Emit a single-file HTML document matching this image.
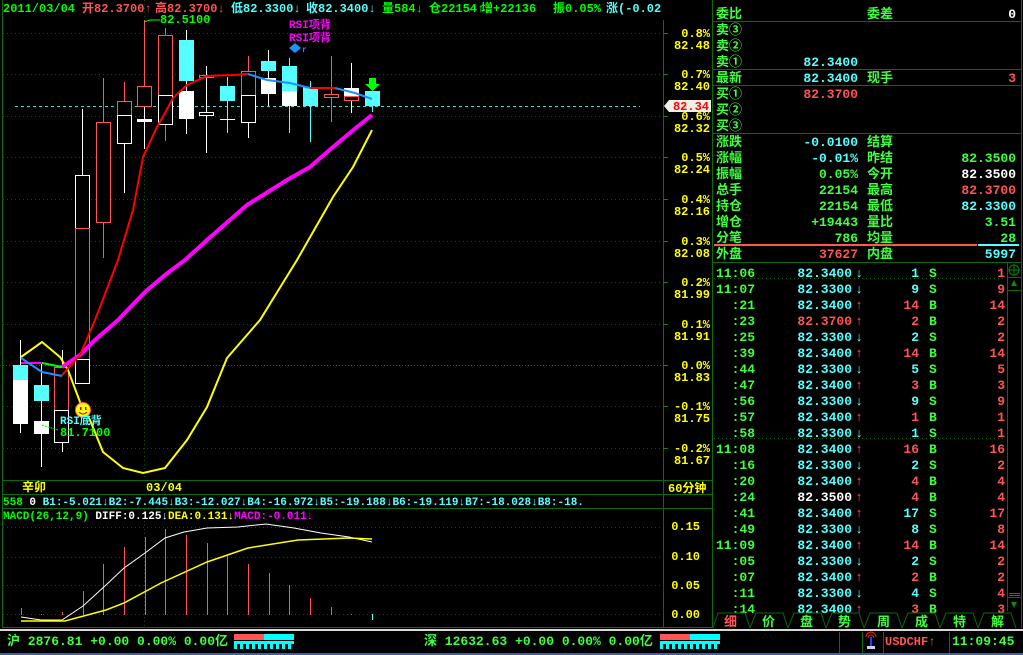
<!DOCTYPE html>
<html><head><meta charset="utf-8">
<style>
html,body{margin:0;padding:0;background:#000;width:1023px;height:655px;overflow:hidden}
svg{display:block}
text{font-family:"Liberation Mono","WenQuanYi Zen Hei","Noto Sans CJK SC",monospace;font-weight:bold}
</style></head><body>
<svg width="1023" height="655" viewBox="0 0 1023 655" xmlns="http://www.w3.org/2000/svg">
<rect width="1023" height="655" fill="#000"/>
<g stroke="#0b6b0b" stroke-width="1" fill="none">
<line x1="2.5" y1="0" x2="2.5" y2="628"/>
<line x1="663.5" y1="0" x2="663.5" y2="628"/>
<line x1="712.5" y1="0" x2="712.5" y2="628"/>
<line x1="1021.5" y1="0" x2="1021.5" y2="628"/>
<line x1="2" y1="480.5" x2="712" y2="480.5"/>
<line x1="2" y1="494.5" x2="712" y2="494.5"/>
<line x1="2" y1="508.5" x2="712" y2="508.5"/>
<line x1="2" y1="627.5" x2="1021" y2="627.5"/>
<line x1="713" y1="21.5" x2="1021" y2="21.5"/>
<line x1="713" y1="69.5" x2="1021" y2="69.5"/>
<line x1="713" y1="85.5" x2="1021" y2="85.5"/>
<line x1="713" y1="133.5" x2="1021" y2="133.5"/>
<line x1="713" y1="262.5" x2="1021" y2="262.5"/>
<line x1="1007.5" y1="262" x2="1007.5" y2="611"/>
<line x1="1008" y1="277.5" x2="1021" y2="277.5"/>
<line x1="1008" y1="290.5" x2="1021" y2="290.5"/>
<line x1="1008" y1="597.5" x2="1021" y2="597.5"/>
</g>
<g stroke="#0d4d0d" stroke-width="1" stroke-dasharray="1,3">
<line x1="3" y1="33.5" x2="663" y2="33.5"/>
<line x1="3" y1="74.5" x2="663" y2="74.5"/>
<line x1="3" y1="116.5" x2="663" y2="116.5"/>
<line x1="3" y1="157.5" x2="663" y2="157.5"/>
<line x1="3" y1="199.5" x2="663" y2="199.5"/>
<line x1="3" y1="241.5" x2="663" y2="241.5"/>
<line x1="3" y1="282.5" x2="663" y2="282.5"/>
<line x1="3" y1="324.5" x2="663" y2="324.5"/>
<line x1="3" y1="406.5" x2="663" y2="406.5"/>
<line x1="3" y1="448.5" x2="663" y2="448.5"/>
<line x1="144.5" y1="0" x2="144.5" y2="480"/>
<line x1="144.5" y1="509" x2="144.5" y2="627"/>
<line x1="3" y1="527.5" x2="663" y2="527.5"/>
<line x1="3" y1="557.5" x2="663" y2="557.5"/>
<line x1="3" y1="585.5" x2="663" y2="585.5"/>
<line x1="3" y1="614.5" x2="663" y2="614.5"/>
</g>
<line x1="3" y1="365.5" x2="663" y2="365.5" stroke="#4a4a4a" stroke-dasharray="1,2"/>
<g stroke="#0b8b0b">
<line x1="663" y1="33.5" x2="668" y2="33.5"/><line x1="663" y1="74.5" x2="668" y2="74.5"/><line x1="663" y1="116.5" x2="668" y2="116.5"/><line x1="663" y1="157.5" x2="668" y2="157.5"/><line x1="663" y1="199.5" x2="668" y2="199.5"/><line x1="663" y1="241.5" x2="668" y2="241.5"/><line x1="663" y1="282.5" x2="668" y2="282.5"/><line x1="663" y1="324.5" x2="668" y2="324.5"/><line x1="663" y1="365.5" x2="668" y2="365.5"/><line x1="663" y1="406.5" x2="668" y2="406.5"/><line x1="663" y1="448.5" x2="668" y2="448.5"/>
</g>
<g fill="#ffff00" font-size="12" text-anchor="end">
<text x="710" y="37">0.8%</text><text x="710" y="49">82.48</text>
<text x="710" y="78">0.7%</text><text x="710" y="90">82.40</text>
<text x="710" y="120">0.6%</text><text x="710" y="132">82.32</text>
<text x="710" y="161">0.5%</text><text x="710" y="173">82.24</text>
<text x="710" y="203">0.4%</text><text x="710" y="215">82.16</text>
<text x="710" y="245">0.3%</text><text x="710" y="257">82.08</text>
<text x="710" y="286">0.2%</text><text x="710" y="298">81.99</text>
<text x="710" y="328">0.1%</text><text x="710" y="340">81.91</text>
<text x="710" y="369">0.0%</text><text x="710" y="381">81.83</text>
<text x="710" y="410">-0.1%</text><text x="710" y="422">81.75</text>
<text x="710" y="452">-0.2%</text><text x="710" y="464">81.67</text>
<text x="700" y="530">0.15</text><text x="700" y="560">0.10</text><text x="700" y="589">0.05</text><text x="700" y="618">0.00</text>
</g>
<polygon points="664,106 669,100 711,100 711,112 669,112" fill="#f0f0e8"/>
<text x="709" y="110" fill="#ff0000" font-size="12" text-anchor="end">82.34</text>
<line x1="15" y1="106.5" x2="640" y2="106.5" stroke="#33dddd" stroke-dasharray="3,3"/>
<g stroke-width="1">
<line x1="20.5" y1="340" x2="20.5" y2="433" stroke="#fff"/>
<rect x="13" y="365" width="15" height="15" fill="#55ffff"/><rect x="13" y="380" width="15" height="44" fill="#fff"/>
<line x1="41.5" y1="364" x2="41.5" y2="467" stroke="#fff"/>
<rect x="34" y="385" width="15" height="16" fill="#55ffff"/><rect x="34" y="421" width="15" height="13" fill="#fff"/>
<line x1="62.5" y1="350" x2="62.5" y2="452" stroke="#fff"/>
<rect x="54.5" y="367.5" width="14" height="43" fill="#000" stroke="#ff5555"/><rect x="54.5" y="410.5" width="14" height="32" fill="#000" stroke="#fff"/>
<line x1="82.5" y1="109" x2="82.5" y2="175" stroke="#fff"/>
<rect x="75.5" y="175.5" width="14" height="53" fill="#000" stroke="#fff"/><rect x="75.5" y="228.5" width="14" height="131" fill="#000" stroke="#ff5555"/><rect x="75.5" y="359.5" width="14" height="24" fill="#000" stroke="#fff"/>
<line x1="103.5" y1="78" x2="103.5" y2="258" stroke="#ff5555"/>
<rect x="96.5" y="122.5" width="14" height="100" fill="#000" stroke="#ff5555"/>
<line x1="124.5" y1="82" x2="124.5" y2="101" stroke="#ff5555"/><line x1="124.5" y1="143" x2="124.5" y2="193" stroke="#fff"/>
<rect x="117.5" y="101.5" width="14" height="14" fill="#000" stroke="#ff5555"/><rect x="117.5" y="115.5" width="14" height="28" fill="#000" stroke="#fff"/>
<line x1="144.5" y1="20" x2="144.5" y2="86" stroke="#ff5555"/><line x1="144.5" y1="106" x2="144.5" y2="149" stroke="#fff"/>
<rect x="137.5" y="86.5" width="14" height="20" fill="#000" stroke="#ff5555"/><rect x="137" y="119" width="15" height="3" fill="#fff"/>
<line x1="165.5" y1="28" x2="165.5" y2="141" stroke="#ff5555"/>
<rect x="158.5" y="35.5" width="14" height="60" fill="#000" stroke="#ff5555"/><rect x="158.5" y="95.5" width="14" height="29" fill="#000" stroke="#fff"/>
<line x1="186.5" y1="30" x2="186.5" y2="134" stroke="#fff"/>
<rect x="179" y="40" width="15" height="41" fill="#55ffff"/><rect x="179" y="91" width="15" height="28" fill="#fff"/>
<line x1="206.5" y1="66" x2="206.5" y2="153" stroke="#fff"/>
<rect x="199.5" y="75.5" width="14" height="2" fill="#000" stroke="#ff5555"/><rect x="199.5" y="112.5" width="14" height="3" fill="#000" stroke="#fff"/>
<line x1="227.5" y1="77" x2="227.5" y2="133" stroke="#55ffff"/>
<rect x="220" y="86" width="15" height="15" fill="#55ffff"/><rect x="220" y="119" width="15" height="1" fill="#fff"/>
<line x1="248.5" y1="56" x2="248.5" y2="71" stroke="#ff5555"/><line x1="248.5" y1="122" x2="248.5" y2="138" stroke="#fff"/>
<rect x="241.5" y="71.5" width="14" height="24" fill="#000" stroke="#ff5555"/><rect x="241.5" y="95.5" width="14" height="27" fill="#000" stroke="#fff"/>
<line x1="268.5" y1="50" x2="268.5" y2="106" stroke="#fff"/>
<rect x="261" y="61" width="15" height="10" fill="#55ffff"/><rect x="261" y="78" width="15" height="16" fill="#fff"/>
<line x1="289.5" y1="58" x2="289.5" y2="133" stroke="#55ffff"/>
<rect x="282" y="66" width="15" height="25" fill="#55ffff"/><rect x="282" y="91" width="15" height="15" fill="#fff"/>
<line x1="310.5" y1="81" x2="310.5" y2="142" stroke="#55ffff"/>
<rect x="303" y="87" width="15" height="19" fill="#55ffff"/>
<line x1="331.5" y1="56" x2="331.5" y2="122" stroke="#ff5555"/>
<rect x="324.5" y="94.5" width="14" height="3" fill="#000" stroke="#ff5555"/>
<line x1="351.5" y1="63" x2="351.5" y2="113" stroke="#fff"/>
<rect x="344" y="88" width="15" height="8" fill="#fff"/><rect x="344.5" y="96.5" width="14" height="4" fill="#000" stroke="#ff5555"/>
<line x1="372.5" y1="106" x2="372.5" y2="112" stroke="#55ffff"/>
<rect x="365" y="91" width="15" height="15" fill="#55ffff"/>
<polygon points="369,78 376,78 376,84 380,84 372.5,91 365,84 369,84" fill="#00ff00"/>
</g>
<polyline fill="none" stroke="#ffff00" stroke-width="2" points="21,357 42,342 60,357 68,370 80,402 90,420 103,452 123,468 143,473 165,468 187,440 207,407 227,358 260,320 297,260 333,197 353,167 372,130"/>
<polyline fill="none" stroke="#ff00ff" stroke-width="4" points="62,367 80,355 95,340 118,320 145,292 165,275 185,260 207,240 247,205 287,180 310,167 333,147 357,127 372,115"/>
<polyline fill="none" stroke="#ff00ff" stroke-width="2" points="21,363 42,363"/>
<polyline fill="none" stroke="#00ff00" stroke-width="2" points="42,363 62,367"/>
<polyline fill="none" stroke="#1e90ff" stroke-width="2" points="21,358 42,372 62,376"/>
<polyline fill="none" stroke="#ff0000" stroke-width="2" points="62,375 80,355 95,320 118,260 133,210 143,157 157,127 165,113 173,98 187,85 207,76 233,75 248,74"/>
<polyline fill="none" stroke="#1e90ff" stroke-width="2" points="248,74 267,80 290,83 310,88"/>
<polyline fill="none" stroke="#ff0000" stroke-width="2" points="310,88 335,88"/>
<polyline fill="none" stroke="#1e90ff" stroke-width="2" points="335,88 355,93 372,99"/>
<polyline fill="none" stroke="#00ff00" points="144,22 150,20 160,20"/>
<text x="160" y="23" fill="#00ff00" font-size="12">82.5100</text>
<g fill="#ff00ff" font-size="11"><text x="289" y="28">RSI项背</text><text x="289" y="41">RSI项背</text></g>
<polygon points="295,43 301,48 295,53 289,48" fill="#1e90ff"/>
<text x="302" y="52" fill="#1e90ff" font-size="8">r</text>
<circle cx="83" cy="410" r="7.5" fill="#ffff00" stroke="#ff5555"/>
<rect x="80" y="407" width="1.5" height="3" fill="#c00"/><rect x="85" y="407" width="1.5" height="3" fill="#c00"/>
<path d="M79 412 Q83 416 87 412" stroke="#c00" fill="none"/>
<text x="60" y="424" fill="#55ffff" font-size="11">RSI底背</text>
<polyline fill="none" stroke="#00ff00" stroke-dasharray="2,1" points="42,425 58,430"/>
<text x="60" y="436" fill="#00ff00" font-size="12">81.7100</text>
<g font-size="12">
<text x="3" y="12" fill="#00ff00">2011/03/04</text>
<text x="82" y="12" fill="#ff5555">开82.3700↑</text>
<text x="155" y="12" fill="#ff5555">高82.3700↓</text>
<text x="231" y="12" fill="#55ffff">低82.3300↓</text>
<text x="306" y="12" fill="#55ffff">收82.3400↓</text>
<text x="382" y="12" fill="#00ff00">量584↓</text>
<text x="429" y="12" fill="#00ff00">仓22154↑</text>
<text x="481" y="12" fill="#00ff00">增+22136</text>
<text x="553" y="12" fill="#00ff00">振0.05%</text>
<text x="606" y="12" fill="#55ffff">涨(-0.02</text>
</g>
<rect x="662" y="0" width="2" height="20" fill="#000"/>
<text x="22" y="491" fill="#ffff00" font-size="12">辛卯</text>
<text x="146" y="491" fill="#ffff00" font-size="12">03/04</text>
<text x="668" y="492" fill="#ffff00" font-size="12">60分钟</text>
<text x="3" y="505" font-size="11"><tspan fill="#00ff00">558</tspan><tspan fill="#fff"> 0 </tspan><tspan fill="#55ffff">B1:-5.021↓B2:-7.445↓B3:-12.027↓B4:-16.972↓B5:-19.188↓B6:-19.119↓B7:-18.028↓B8:-18.</tspan></text>
<text x="3" y="519" font-size="11"><tspan fill="#00ff00">MACD(26,12,9)</tspan><tspan fill="#fff"> DIFF:0.125↓</tspan><tspan fill="#ffff00">DEA:0.131↓</tspan><tspan fill="#ff00ff">MACD:-0.011↓</tspan></text>
<g stroke="#ff5555" stroke-width="1">
<line x1="21.5" y1="608" x2="21.5" y2="615"/><line x1="41.5" y1="614" x2="41.5" y2="615"/><line x1="62.5" y1="612" x2="62.5" y2="615"/><line x1="83.5" y1="591" x2="83.5" y2="615"/><line x1="103.5" y1="564" x2="103.5" y2="615"/><line x1="124.5" y1="547" x2="124.5" y2="615"/><line x1="145.5" y1="537" x2="145.5" y2="615"/><line x1="165.5" y1="529" x2="165.5" y2="615"/><line x1="186.5" y1="535" x2="186.5" y2="615"/><line x1="207.5" y1="543" x2="207.5" y2="615"/><line x1="227.5" y1="556" x2="227.5" y2="615"/><line x1="248.5" y1="564" x2="248.5" y2="615"/><line x1="269.5" y1="573" x2="269.5" y2="615"/><line x1="289.5" y1="585" x2="289.5" y2="615"/><line x1="310.5" y1="598" x2="310.5" y2="615"/><line x1="331.5" y1="607" x2="331.5" y2="615"/><line x1="351.5" y1="614" x2="351.5" y2="615"/>
</g>
<line x1="372.5" y1="614" x2="372.5" y2="620" stroke="#55ffff"/>
<polyline fill="none" stroke="#fff" points="21,617 41,620 62,620 83,606 106,585 124,568 145,553 165,538 184,532 207,528 238,527 266,524 294,528 321,533 349,537 372,542"/>
<polyline fill="none" stroke="#ffff00" stroke-width="1.5" points="21,621 65,621 106,610 124,603 161,583 207,562 248,548 298,540 349,538 372,539"/>
<text x="760" y="-2" fill="#55ffff" font-size="12">82.3400</text>
<g font-size="13" fill="#40ff40">
<text x="716" y="18">委比</text><text x="867" y="18">委差</text>
<text x="716" y="34">卖③</text><text x="716" y="50">卖②</text><text x="716" y="66">卖①</text>
<text x="716" y="82">最新</text><text x="867" y="82">现手</text>
<text x="716" y="98">买①</text><text x="716" y="114">买②</text><text x="716" y="130">买③</text>
<text x="716" y="146">涨跌</text><text x="867" y="146">结算</text>
<text x="716" y="162">涨幅</text><text x="867" y="162">昨结</text>
<text x="716" y="178">振幅</text><text x="867" y="178">今开</text>
<text x="716" y="194">总手</text><text x="867" y="194">最高</text>
<text x="716" y="210">持仓</text><text x="867" y="210">最低</text>
<text x="716" y="226">增仓</text><text x="867" y="226">量比</text>
<text x="716" y="242">分笔</text><text x="867" y="242">均量</text>
<text x="716" y="258">外盘</text><text x="867" y="258">内盘</text>
</g>
<g font-size="13" text-anchor="end">
<text x="1016" y="18" fill="#fff">0</text>
<text x="858" y="66" fill="#55ffff">82.3400</text>
<text x="858" y="82" fill="#55ffff">82.3400</text><text x="1016" y="82" fill="#ff5555">3</text>
<text x="858" y="98" fill="#ff5555">82.3700</text>
<text x="858" y="146" fill="#55ffff">-0.0100</text>
<text x="858" y="162" fill="#55ffff">-0.01%</text><text x="1016" y="162" fill="#40ff40">82.3500</text>
<text x="858" y="178" fill="#40ff40">0.05%</text><text x="1016" y="178" fill="#fff">82.3500</text>
<text x="858" y="194" fill="#40ff40">22154</text><text x="1016" y="194" fill="#ff5555">82.3700</text>
<text x="858" y="210" fill="#40ff40">22154</text><text x="1016" y="210" fill="#55ffff">82.3300</text>
<text x="858" y="226" fill="#40ff40">+19443</text><text x="1016" y="226" fill="#40ff40">3.51</text>
<text x="858" y="242" fill="#40ff40">786</text><text x="1016" y="242" fill="#40ff40">28</text>
<text x="858" y="258" fill="#ff5555">37627</text><text x="1016" y="258" fill="#55ffff">5997</text>
</g>
<rect x="714" y="244" width="263" height="2" fill="#ff5555"/>
<rect x="978" y="244" width="41" height="2" fill="#55ffff"/>
<g stroke="#0d6d0d" stroke-dasharray="1,3"><line x1="714" y1="278.5" x2="1006" y2="278.5"/><line x1="714" y1="438.5" x2="1006" y2="438.5"/></g>
<g font-size="13">
<g fill="#40ff40">
<text x="716" y="277">11:06</text><text x="716" y="293">11:07</text>
<text x="755" y="309" text-anchor="end">:21</text><text x="755" y="325" text-anchor="end">:23</text><text x="755" y="341" text-anchor="end">:25</text><text x="755" y="357" text-anchor="end">:39</text><text x="755" y="373" text-anchor="end">:44</text><text x="755" y="389" text-anchor="end">:47</text><text x="755" y="405" text-anchor="end">:56</text><text x="755" y="421" text-anchor="end">:57</text><text x="755" y="437" text-anchor="end">:58</text>
<text x="716" y="453">11:08</text>
<text x="755" y="469" text-anchor="end">:16</text><text x="755" y="485" text-anchor="end">:20</text><text x="755" y="501" text-anchor="end">:24</text><text x="755" y="517" text-anchor="end">:41</text><text x="755" y="533" text-anchor="end">:49</text>
<text x="716" y="549">11:09</text>
<text x="755" y="565" text-anchor="end">:05</text><text x="755" y="581" text-anchor="end">:07</text><text x="755" y="597" text-anchor="end">:11</text><text x="755" y="613" text-anchor="end">:14</text>
<text x="929" y="277">S</text><text x="929" y="293">S</text><text x="929" y="309">B</text><text x="929" y="325">B</text><text x="929" y="341">S</text><text x="929" y="357">B</text><text x="929" y="373">S</text><text x="929" y="389">B</text><text x="929" y="405">S</text><text x="929" y="421">B</text><text x="929" y="437">S</text><text x="929" y="453">B</text><text x="929" y="469">S</text><text x="929" y="485">B</text><text x="929" y="501">B</text><text x="929" y="517">S</text><text x="929" y="533">S</text><text x="929" y="549">B</text><text x="929" y="565">S</text><text x="929" y="581">B</text><text x="929" y="597">S</text><text x="929" y="613">B</text>
</g>
<g text-anchor="end">
<text x="852" y="277" fill="#55ffff">82.3400</text><text x="852" y="293" fill="#55ffff">82.3300</text><text x="852" y="309" fill="#55ffff">82.3400</text><text x="852" y="325" fill="#ff5555">82.3700</text><text x="852" y="341" fill="#55ffff">82.3300</text><text x="852" y="357" fill="#55ffff">82.3400</text><text x="852" y="373" fill="#55ffff">82.3300</text><text x="852" y="389" fill="#55ffff">82.3400</text><text x="852" y="405" fill="#55ffff">82.3300</text><text x="852" y="421" fill="#55ffff">82.3400</text><text x="852" y="437" fill="#55ffff">82.3300</text><text x="852" y="453" fill="#55ffff">82.3400</text><text x="852" y="469" fill="#55ffff">82.3300</text><text x="852" y="485" fill="#55ffff">82.3400</text><text x="852" y="501" fill="#fff">82.3500</text><text x="852" y="517" fill="#55ffff">82.3400</text><text x="852" y="533" fill="#55ffff">82.3300</text><text x="852" y="549" fill="#55ffff">82.3400</text><text x="852" y="565" fill="#55ffff">82.3300</text><text x="852" y="581" fill="#55ffff">82.3400</text><text x="852" y="597" fill="#55ffff">82.3300</text><text x="852" y="613" fill="#55ffff">82.3400</text>
<text x="863" y="277" fill="#55ffff">↓</text><text x="863" y="293" fill="#55ffff">↓</text><text x="863" y="309" fill="#ff5555">↑</text><text x="863" y="325" fill="#ff5555">↑</text><text x="863" y="341" fill="#55ffff">↓</text><text x="863" y="357" fill="#ff5555">↑</text><text x="863" y="373" fill="#55ffff">↓</text><text x="863" y="389" fill="#ff5555">↑</text><text x="863" y="405" fill="#55ffff">↓</text><text x="863" y="421" fill="#ff5555">↑</text><text x="863" y="437" fill="#55ffff">↓</text><text x="863" y="453" fill="#ff5555">↑</text><text x="863" y="469" fill="#55ffff">↓</text><text x="863" y="485" fill="#ff5555">↑</text><text x="863" y="501" fill="#ff5555">↑</text><text x="863" y="517" fill="#ff5555">↑</text><text x="863" y="533" fill="#55ffff">↓</text><text x="863" y="549" fill="#ff5555">↑</text><text x="863" y="565" fill="#55ffff">↓</text><text x="863" y="581" fill="#ff5555">↑</text><text x="863" y="597" fill="#55ffff">↓</text><text x="863" y="613" fill="#ff5555">↑</text>
<text x="919" y="277" fill="#55ffff">1</text><text x="919" y="293" fill="#55ffff">9</text><text x="919" y="309" fill="#ff5555">14</text><text x="919" y="325" fill="#ff5555">2</text><text x="919" y="341" fill="#55ffff">2</text><text x="919" y="357" fill="#ff5555">14</text><text x="919" y="373" fill="#55ffff">5</text><text x="919" y="389" fill="#ff5555">3</text><text x="919" y="405" fill="#55ffff">9</text><text x="919" y="421" fill="#ff5555">1</text><text x="919" y="437" fill="#55ffff">1</text><text x="919" y="453" fill="#ff5555">16</text><text x="919" y="469" fill="#55ffff">2</text><text x="919" y="485" fill="#ff5555">4</text><text x="919" y="501" fill="#ff5555">4</text><text x="919" y="517" fill="#55ffff">17</text><text x="919" y="533" fill="#55ffff">8</text><text x="919" y="549" fill="#ff5555">14</text><text x="919" y="565" fill="#55ffff">2</text><text x="919" y="581" fill="#ff5555">2</text><text x="919" y="597" fill="#55ffff">4</text><text x="919" y="613" fill="#ff5555">3</text>
<g fill="#ff5555"><text x="1005" y="277">1</text><text x="1005" y="293">9</text><text x="1005" y="309">14</text><text x="1005" y="325">2</text><text x="1005" y="341">2</text><text x="1005" y="357">14</text><text x="1005" y="373">5</text><text x="1005" y="389">3</text><text x="1005" y="405">9</text><text x="1005" y="421">1</text><text x="1005" y="437">1</text><text x="1005" y="453">16</text><text x="1005" y="469">2</text><text x="1005" y="485">4</text><text x="1005" y="501">4</text><text x="1005" y="517">17</text><text x="1005" y="533">8</text><text x="1005" y="549">14</text><text x="1005" y="565">2</text><text x="1005" y="581">2</text><text x="1005" y="597">4</text><text x="1005" y="613">3</text></g>
</g>
</g>
<circle cx="1014" cy="270" r="5" fill="none" stroke="#0b8b0b"/><line x1="1009" y1="270" x2="1019" y2="270" stroke="#0b8b0b"/><line x1="1014" y1="265" x2="1014" y2="275" stroke="#0b8b0b"/>
<polygon points="1014,280 1017,286 1011,286" fill="#0b8b0b"/>
<polygon points="1014,608 1017,602 1011,602" fill="#0b8b0b"/>
<g stroke="#0b8b0b"><line x1="1009" y1="593.5" x2="1020" y2="593.5"/><line x1="1009" y1="595.5" x2="1020" y2="595.5"/></g>
<rect x="713" y="613" width="308" height="15" fill="#000"/>
<g stroke="#0b6b0b" fill="none">
<path d="M713 628 L718 613 L745 613 L750 628 M750 628 L756 613 L783 613 L788 628 M788 628 L794 613 L821 613 L826 628 M826 628 L832 613 L859 613 L864 628 M864 628 L870 613 L897 613 L902 628 M902 628 L908 613 L935 613 L940 628 M940 628 L946 613 L973 613 L978 628 M978 628 L984 613 L1011 613 L1016 628"/></g>
<g font-size="13"><text x="724" y="626" fill="#ff5555">细</text><g fill="#40ff40"><text x="762" y="626">价</text><text x="800" y="626">盘</text><text x="838" y="626">势</text><text x="877" y="626">周</text><text x="915" y="626">成</text><text x="953" y="626">特</text><text x="991" y="626">解</text></g></g>
<rect x="0" y="629" width="1023" height="2" fill="#d8d8d8"/>
<rect x="0" y="653" width="1023" height="2" fill="#4060a0"/>
<g font-size="13" fill="#40ff40">
<text x="7" y="645">沪 2876.81 +0.00 0.00% 0.00亿</text>
<text x="424" y="645">深 12632.63 +0.00 0.00% 0.00亿</text>
<text x="952" y="645">11:09:45</text>
</g>
<text x="885" y="645" fill="#ff5555" font-size="12">USDCHF↑</text>
<g>
<rect x="234" y="634" width="30" height="6" fill="#ff5555"/><rect x="264" y="634" width="30" height="6" fill="#00ffff"/>
<rect x="234" y="641" width="60" height="3" fill="#00ffff"/>
<g fill="#00ffff"><rect x="234" y="644" width="3" height="5"/><rect x="240" y="644" width="3" height="5"/><rect x="246" y="644" width="3" height="5"/><rect x="252" y="644" width="3" height="5"/><rect x="258" y="644" width="3" height="5"/><rect x="264" y="644" width="3" height="5"/><rect x="270" y="644" width="3" height="5"/><rect x="276" y="644" width="3" height="5"/><rect x="282" y="644" width="3" height="5"/><rect x="288" y="644" width="3" height="5"/></g>
<rect x="660" y="634" width="30" height="6" fill="#ff5555"/><rect x="690" y="634" width="30" height="6" fill="#00ffff"/>
<rect x="660" y="641" width="60" height="3" fill="#00ffff"/>
<g fill="#00ffff"><rect x="660" y="644" width="3" height="5"/><rect x="666" y="644" width="3" height="5"/><rect x="672" y="644" width="3" height="5"/><rect x="678" y="644" width="3" height="5"/><rect x="684" y="644" width="3" height="5"/><rect x="690" y="644" width="3" height="5"/><rect x="696" y="644" width="3" height="5"/><rect x="702" y="644" width="3" height="5"/><rect x="708" y="644" width="3" height="5"/><rect x="714" y="644" width="3" height="5"/></g>
</g>
<g stroke="#0b6b0b"><line x1="839.5" y1="632" x2="839.5" y2="653"/><line x1="862.5" y1="632" x2="862.5" y2="653"/><line x1="883.5" y1="632" x2="883.5" y2="653"/><line x1="949.5" y1="632" x2="949.5" y2="653"/></g>
<g><path d="M866 637 A5 5 0 0 1 876 637 M868 638 A3 3 0 0 1 874 638" stroke="#ff2020" fill="none"/><rect x="870" y="637" width="2" height="9" fill="#2040ff"/><rect x="867" y="646" width="8" height="3" fill="#d0d0ff"/></g>
</svg>
</body></html>
